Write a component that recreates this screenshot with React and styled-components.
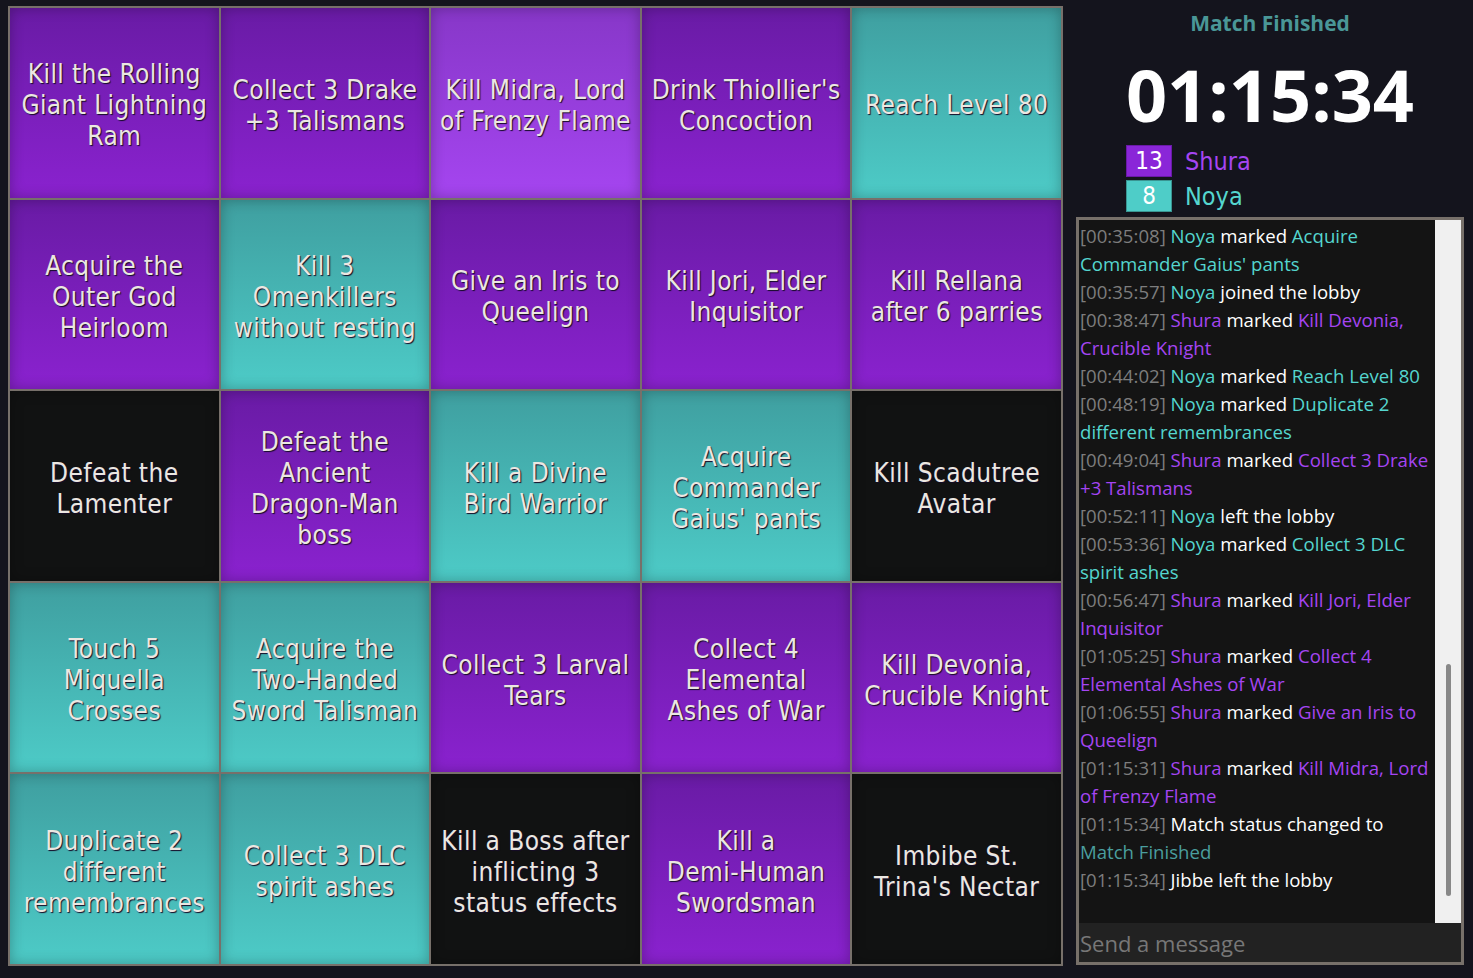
import React from "react";
import styled, { createGlobalStyle } from "styled-components";

const GlobalStyle = createGlobalStyle`
  html, body {
    margin: 0;
    padding: 0;
    background: #14141d;
  }
  body {
    font-family: "Open Sans", "Noto Sans", sans-serif;
  }
`;

const teamColor = {
  shura: "#a545f2",
  noya: "#55d6cf",
};

const cellFill = {
  shura: "linear-gradient(180deg, #691ba5 0%, #8a22cf 100%)",
  noya: "linear-gradient(180deg, #3f9fa0 0%, #4dcbc7 100%)",
  none: "#111212",
};

// non-breaking hyphen keeps compound names on one line, as in the app
const NBH = "\u2011";

const board = [
  [
    { text: "Kill the Rolling Giant Lightning Ram", team: "shura" },
    { text: "Collect 3 Drake +3 Talismans", team: "shura" },
    { text: "Kill Midra, Lord of Frenzy Flame", team: "shura", latest: true },
    { text: "Drink Thiollier's Concoction", team: "shura" },
    { text: "Reach Level 80", team: "noya" },
  ],
  [
    { text: "Acquire the Outer God Heirloom", team: "shura" },
    { text: "Kill 3 Omenkillers without resting", team: "noya" },
    { text: "Give an Iris to Queelign", team: "shura" },
    { text: "Kill Jori, Elder Inquisitor", team: "shura" },
    { text: "Kill Rellana after 6 parries", team: "shura" },
  ],
  [
    { text: "Defeat the Lamenter", team: "none" },
    { text: `Defeat the Ancient Dragon${NBH}Man boss`, team: "shura" },
    { text: "Kill a Divine Bird Warrior", team: "noya" },
    { text: "Acquire Commander Gaius' pants", team: "noya" },
    { text: "Kill Scadutree Avatar", team: "none" },
  ],
  [
    { text: "Touch 5 Miquella Crosses", team: "noya" },
    { text: `Acquire the Two${NBH}Handed Sword Talisman`, team: "noya" },
    { text: "Collect 3 Larval Tears", team: "shura" },
    { text: "Collect 4 Elemental Ashes of War", team: "shura" },
    { text: "Kill Devonia, Crucible Knight", team: "shura" },
  ],
  [
    { text: "Duplicate 2 different remembrances", team: "noya" },
    { text: "Collect 3 DLC spirit ashes", team: "noya" },
    { text: "Kill a Boss after inflicting 3 status effects", team: "none" },
    { text: `Kill a Demi${NBH}Human Swordsman`, team: "shura" },
    { text: "Imbibe St. Trina's Nectar", team: "none" },
  ],
];

const log = [
  { time: "00:35:08", who: "Noya", team: "noya", verb: "marked", goal: "Acquire Commander Gaius' pants" },
  { time: "00:35:57", who: "Noya", team: "noya", verb: "joined the lobby" },
  { time: "00:38:47", who: "Shura", team: "shura", verb: "marked", goal: "Kill Devonia, Crucible Knight" },
  { time: "00:44:02", who: "Noya", team: "noya", verb: "marked", goal: "Reach Level 80" },
  { time: "00:48:19", who: "Noya", team: "noya", verb: "marked", goal: "Duplicate 2 different remembrances" },
  { time: "00:49:04", who: "Shura", team: "shura", verb: "marked", goal: "Collect 3 Drake +3 Talismans" },
  { time: "00:52:11", who: "Noya", team: "noya", verb: "left the lobby" },
  { time: "00:53:36", who: "Noya", team: "noya", verb: "marked", goal: "Collect 3 DLC spirit ashes" },
  { time: "00:56:47", who: "Shura", team: "shura", verb: "marked", goal: "Kill Jori, Elder Inquisitor" },
  { time: "01:05:25", who: "Shura", team: "shura", verb: "marked", goal: "Collect 4 Elemental Ashes of War" },
  { time: "01:06:55", who: "Shura", team: "shura", verb: "marked", goal: "Give an Iris to Queelign" },
  { time: "01:15:31", who: "Shura", team: "shura", verb: "marked", goal: "Kill Midra, Lord of Frenzy Flame" },
  { time: "01:15:34", verb: "Match status changed to", status: "Match Finished" },
  { time: "01:15:34", who: "Jibbe", verb: "left the lobby" },
];

const Page = styled.div`
  display: flex;
  width: 1473px;
  height: 978px;
  box-sizing: border-box;
  padding: 6px 0 0 8px;
`;

const Board = styled.div`
  display: grid;
  grid-template-columns: repeat(5, 1fr);
  grid-template-rows: repeat(5, 1fr);
  gap: 2px;
  padding: 2px;
  width: 1055px;
  height: 960px;
  box-sizing: border-box;
  background: #77706a;
`;

const Cell = styled.div`
  display: flex;
  align-items: center;
  justify-content: center;
  padding: 6px 8px 0;
  text-align: center;
  background: ${(p) =>
    p.$latest ? "linear-gradient(180deg, #8737c8 0%, #a545f0 100%)" : cellFill[p.$team]};
  box-shadow: inset 0 0 14px rgba(0, 0, 0, 0.28);
  color: #ebe7e2;
  font-family: "DejaVu Sans Condensed", "DejaVu Sans", sans-serif;
  font-size: 26px;
  line-height: 31px;
  letter-spacing: 0.4px;
  text-shadow: 1px 1px 1px #160c28;
`;

const Side = styled.aside`
  flex: 1;
  display: flex;
  flex-direction: column;
  align-items: center;
  padding: 3px 9px 0 13px;
`;

const Status = styled.div`
  font-size: 21px;
  line-height: 28px;
  font-weight: 700;
  color: #4a9797;
`;

const Timer = styled.div`
  margin-top: 17px;
  font-size: 72px;
  line-height: 80px;
  font-weight: 700;
  color: #ffffff;
`;

const Scores = styled.div`
  align-self: flex-start;
  margin: 11px 0 0 50px;
  display: flex;
  flex-direction: column;
  gap: 3px;
`;

const ScoreRow = styled.div`
  display: flex;
  align-items: center;
  gap: 13px;
`;

const ScoreBox = styled.div`
  width: 46px;
  height: 32px;
  box-sizing: border-box;
  display: flex;
  align-items: center;
  justify-content: center;
  background: ${(p) => (p.$team === "shura" ? "#8a26d8" : "#4ecdc8")};
  border: 1px solid ${(p) => (p.$team === "shura" ? "#6a1aa8" : "#3a9592")};
  color: #ffffff;
  font-family: "DejaVu Sans Condensed", "DejaVu Sans", sans-serif;
  font-size: 24px;
  font-weight: 300;
`;

const ScoreName = styled.span`
  font-family: "DejaVu Sans Condensed", "DejaVu Sans", sans-serif;
  font-size: 25px;
  color: ${(p) => teamColor[p.$team]};
`;

const Chat = styled.section`
  margin-top: 5px;
  width: 388px;
  height: 748px;
  box-sizing: border-box;
  border: 3px solid #77706a;
  background: #141414;
  display: flex;
  flex-direction: column;
`;

const LogArea = styled.div`
  flex: 1;
  min-height: 0;
  display: flex;
`;

const Log = styled.div`
  flex: 1;
  overflow: hidden;
  padding: 2px 0 0 1px;
  font-size: 18.6px;
  line-height: 28px;
  color: #ffffff;
`;

const Line = styled.div``;

const Stamp = styled.span`
  color: #7d7d7d;
`;

const Who = styled.span`
  color: ${(p) => (p.$team ? teamColor[p.$team] : "#ffffff")};
`;

const Goal = styled.span`
  color: ${(p) => teamColor[p.$team]};
`;

const StatusWord = styled.span`
  color: #4a9e9e;
`;

const Track = styled.div`
  width: 26px;
  background: #f0f0f0;
  padding-top: 444px;
`;

const Thumb = styled.div`
  width: 5px;
  height: 232px;
  margin-left: 11px;
  background: #888888;
  border-radius: 3px;
`;

const Input = styled.input`
  height: 39px;
  box-sizing: border-box;
  border: none;
  outline: none;
  background: #222222;
  padding: 0 1px;
  font-family: "Open Sans", sans-serif;
  font-size: 22px;
  color: #ffffff;
  &::placeholder {
    color: #777777;
  }
`;

const App = () => {
  return (
    <>
      <GlobalStyle />
      <Page>
        <Board>
          {board.flat().map((cell, i) => (
            <Cell key={i} $team={cell.team} $latest={cell.latest}>
              {cell.text}
            </Cell>
          ))}
        </Board>
        <Side>
          <Status>Match Finished</Status>
          <Timer>01:15:34</Timer>
          <Scores>
            <ScoreRow>
              <ScoreBox $team="shura">13</ScoreBox>
              <ScoreName $team="shura">Shura</ScoreName>
            </ScoreRow>
            <ScoreRow>
              <ScoreBox $team="noya">8</ScoreBox>
              <ScoreName $team="noya">Noya</ScoreName>
            </ScoreRow>
          </Scores>
          <Chat>
            <LogArea>
              <Log>
                {log.map((m, i) => (
                  <Line key={i}>
                    <Stamp>[{m.time}]</Stamp> {m.who && <Who $team={m.team}>{m.who}</Who>}
                    {m.who && " "}
                    {m.verb}
                    {m.goal && (
                      <>
                        {" "}
                        <Goal $team={m.team}>{m.goal}</Goal>
                      </>
                    )}
                    {m.status && (
                      <>
                        {" "}
                        <StatusWord>{m.status}</StatusWord>
                      </>
                    )}
                  </Line>
                ))}
              </Log>
              <Track>
                <Thumb />
              </Track>
            </LogArea>
            <Input placeholder="Send a message" />
          </Chat>
        </Side>
      </Page>
    </>
  );
};

export default App;
